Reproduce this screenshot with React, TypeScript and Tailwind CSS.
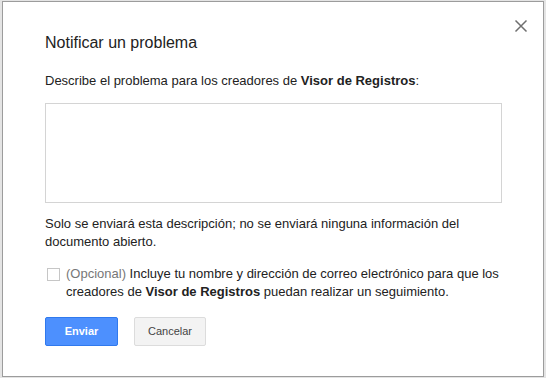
import * as React from "react";

export default function App() {
  return (
    <div className="w-[546px] h-[378px] bg-[#e4e4e4] pt-px pl-[2px] font-['Liberation_Sans',Arial,sans-serif] overflow-hidden">
      <div className="relative w-[542px] h-[376px] bg-white border border-[#9c9c9c] pl-[42px] pr-[42px] pt-[31px] text-[#222]">
        <button className="absolute top-[16px] right-[14px] w-4 h-4 flex items-center justify-center">
          <svg width="14" height="14" viewBox="0 0 14 14">
            <path d="M1.5 1.5L12.5 12.5M12.5 1.5L1.5 12.5" stroke="#6f6f6f" strokeWidth="1.5" />
          </svg>
        </button>

        <h1 className="text-[16px] leading-[20px] font-normal">Notificar un problema</h1>

        <p className="mt-[19px] text-[13px] leading-[18px]">
          Describe el problema para los creadores de <b>Visor de Registros</b>:
        </p>

        <textarea className="block mt-[13px] w-[457px] h-[100px] border border-[#d4d4d4] resize-none outline-none" />

        <p className="mt-[12px] text-[13px] leading-[18px] w-[440px]">
          Solo se enviará esta descripción; no se enviará ninguna información del documento abierto.
        </p>

        <div className="mt-[14px] flex items-start gap-[6px] text-[13px] leading-[18px]">
          <div className="mt-[3px] ml-[2px] w-[13px] h-[13px] border border-[#c6c6c6] bg-white shrink-0" />
          <p className="w-[450px]">
            <span className="text-[#777]">(Opcional)</span> Incluye tu nombre y dirección de correo electrónico para que los creadores de <b>Visor de Registros</b> puedan realizar un seguimiento.
          </p>
        </div>

        <div className="mt-[16px] flex gap-[16px]">
          <button className="w-[73px] h-[29px] rounded-[2px] border border-[#3079ed] bg-[#4d90fe] text-white text-[11px] font-bold">
            Enviar
          </button>
          <button className="w-[72px] h-[29px] rounded-[2px] border border-[#dcdcdc] bg-[#f3f3f3] text-[#444] text-[11px]">
            Cancelar
          </button>
        </div>
      </div>
    </div>
  );
}
